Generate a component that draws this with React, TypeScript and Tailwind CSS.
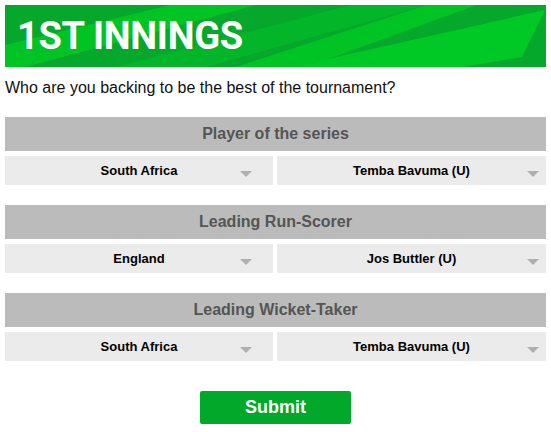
const arial = { fontFamily: '"Liberation Sans", Arial, sans-serif' };

type Pick = { title: string; left: string; right: string };

const picks: Pick[] = [
  { title: 'Player of the series', left: 'South Africa', right: 'Temba Bavuma (U)' },
  { title: 'Leading Run-Scorer', left: 'England', right: 'Jos Buttler (U)' },
  { title: 'Leading Wicket-Taker', left: 'South Africa', right: 'Temba Bavuma (U)' },
];

function Caret() {
  return (
    <svg width="12" height="6" viewBox="0 0 12 6" className="block">
      <path d="M0 0h12L6 6z" fill="#b0b0b0" />
    </svg>
  );
}

function SelectBox({ value, arrowRight }: { value: string; arrowRight: string }) {
  return (
    <div className="relative flex h-[29px] items-center justify-center bg-[#ebebeb]">
      <span className="text-[13px] font-bold text-black">{value}</span>
      <span className={`absolute top-[15px] ${arrowRight}`}>
        <Caret />
      </span>
    </div>
  );
}

function Banner() {
  return (
    <div className="relative h-[62px] overflow-hidden bg-[#06a82b]">
      {/* diagonal stripes */}
      <svg className="absolute inset-0 h-full w-full" viewBox="0 0 539 62" preserveAspectRatio="none">
        <polygon points="0,40 165,0 250,0 20,62 0,62" fill="#00c424" />
        <polygon points="110,62 345,0 420,0 200,62" fill="#03b629" />
        <polygon points="286,62 538,5 515,52 456,62" fill="#00c824" />
        <polygon points="230,62 420,0 470,0 300,62" fill="#00c424" />
      </svg>
      <div
        className="relative pl-3 pt-[9px] text-[38px] font-bold leading-[44px] tracking-[-0.3px] text-white"
        style={{ fontFamily: 'Roboto, "DejaVu Sans", sans-serif' }}
      >
        1ST INNINGS
      </div>
    </div>
  );
}

export default function App() {
  return (
    <div className="min-h-[432px] bg-white p-[5px]" style={arial}>
      <Banner />
      <p className="mt-[12px] text-[16px] leading-[18px] text-[#111]">
        Who are you backing to be the best of the tournament?
      </p>
      <div className="mt-[20px] flex flex-col gap-5">
        {picks.map((p) => (
          <div key={p.title} className="flex flex-col gap-[5px]">
            <div className="flex h-[34px] items-center justify-center bg-[#bbbbbb] text-[16px] font-bold text-[#555]">
              {p.title}
            </div>
            <div className="grid grid-cols-[268px_1fr] gap-1">
              <SelectBox value={p.left} arrowRight="right-[21px]" />
              <SelectBox value={p.right} arrowRight="right-[7px]" />
            </div>
          </div>
        ))}
      </div>
      <div className="mt-[30px] flex justify-center">
        <button className="h-[33px] w-[151px] rounded-[2px] bg-[#02a82a] text-[18px] font-bold text-white">
          Submit
        </button>
      </div>
    </div>
  );
}
